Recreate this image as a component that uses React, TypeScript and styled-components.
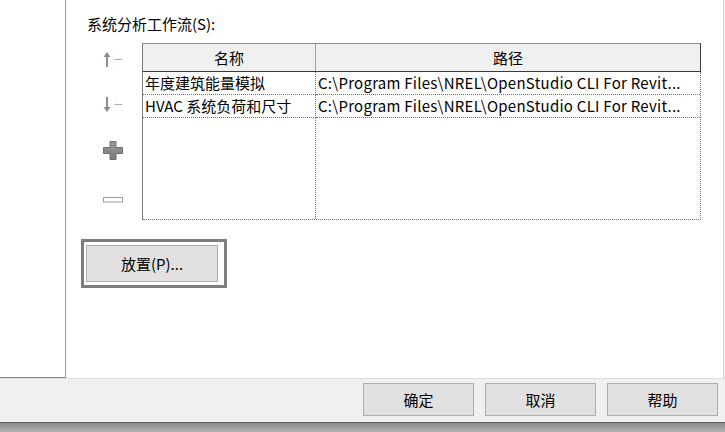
import React from "react";
import styled, { createGlobalStyle } from "styled-components";

const Global = createGlobalStyle`
  html, body { margin: 0; padding: 0; background: #ffffff; }
  body { font-family: "Noto Sans CJK SC", "Noto Sans", sans-serif; color: #000; }
  * { box-sizing: border-box; }
`;

const Window = styled.div`
  width: 725px;
  height: 432px;
  display: flex;
  flex-direction: column;
  overflow: hidden;
  font-size: 15px;
`;

const TopArea = styled.div`
  height: 378px;
  display: flex;
  background: #f0f0f0;
`;

const SidePanel = styled.div`
  width: 66px;
  height: 378px;
  background: #ffffff;
  border-right: 1px solid #9c9c9c;
  border-bottom: 1px solid #8a8a8a;
`;

const Main = styled.div`
  width: 658px;
  background: #ffffff;
  border-right: 1px solid #d2d2d2;
  padding: 14px 0 0 21px;
  display: flex;
  flex-direction: column;
`;

const Label = styled.div`
  height: 20px;
  line-height: 20px;
  white-space: nowrap;
`;

const ListRow = styled.div`
  display: flex;
  margin-top: 9px;
  gap: 19px;
`;

const IconColumn = styled.div`
  width: 20px;
  margin-left: 16px;
  display: flex;
  flex-direction: column;
  padding-top: 7px;
`;

const IconSlot = styled.div<{ $gap: number }>`
  width: 20px;
  height: 20px;
  margin-top: ${(p) => p.$gap}px;
  display: flex;
  align-items: center;
  justify-content: flex-start;
`;

const Table = styled.div`
  width: 559px;
  height: 177px;
  display: flex;
  flex-direction: column;
  border-left: 1px solid #7a7a7a;
`;

const HeaderRow = styled.div`
  height: 29px;
  display: grid;
  grid-template-columns: 173px 1fr;
  background: #f0f0f0;
  border-top: 1px solid #8e8e8e;
  border-bottom: 1px solid #3a3a3a;
  border-right: 1px solid #3a3a3a;
`;

const HeaderCell = styled.div<{ $divider?: boolean }>`
  display: flex;
  align-items: center;
  justify-content: center;
  line-height: 20px;
  border-right: ${(p) => (p.$divider ? "1px solid #a0a0a0" : "none")};
`;

const Body = styled.div`
  flex: 1;
  display: grid;
  grid-template-columns: 173px 1fr;
  grid-template-rows: 23px 23px 1fr;
  border-right: 1px dotted #707070;
  border-bottom: 1px dotted #707070;
`;

const Cell = styled.div<{ $divider?: boolean; $filler?: boolean; $latin?: boolean }>`
  display: flex;
  align-items: center;
  padding-left: 2px;
  white-space: nowrap;
  overflow: hidden;
  line-height: 20px;
  letter-spacing: ${(p) => (p.$latin ? "0.26px" : "0")};
  border-right: ${(p) => (p.$divider ? "1px dotted #707070" : "none")};
  border-bottom: ${(p) => (p.$filler ? "none" : "1px dotted #707070")};
`;

const PlaceFocus = styled.div`
  margin-top: 19px;
  margin-left: -6px;
  width: 146px;
  height: 49px;
  border: 3px solid #7e7e7e;
  padding: 3px 6px 3px 2px;
  display: flex;
`;

const PushButton = styled.div<{ $w?: number; $h?: number }>`
  width: ${(p) => (p.$w ? `${p.$w}px` : "100%")};
  height: ${(p) => (p.$h ? `${p.$h}px` : "100%")};
  background: #e1e1e1;
  border: 1px solid #adadad;
  display: flex;
  align-items: center;
  justify-content: center;
  line-height: 20px;
  white-space: nowrap;
`;

const BottomBar = styled.div`
  height: 44px;
  background: #f0f0f0;
  border-top: 1px solid #dedede;
  padding: 4px 7px 0 0;
  display: flex;
  justify-content: flex-end;
  gap: 11px;
`;

const Strip = styled.div`
  height: 10px;
  border-top: 1px solid #5e5e5e;
  background: linear-gradient(#8d8d8d, #b3b3b3);
`;

const UpIcon = () => (
  <svg width="20" height="16" viewBox="0 0 20 16">
    <polygon points="4,0 7.5,5 5,5 5,15 3,15 3,5 0.5,5" fill="#8c8c8c" />
    <line x1="11" y1="7.5" x2="19" y2="7.5" stroke="#a8a8a8" strokeWidth="1" />
    <line x1="12" y1="1" x2="12" y2="14" stroke="#e2e2e2" strokeWidth="1" strokeDasharray="1 2" />
  </svg>
);

const DownIcon = () => (
  <svg width="20" height="16" viewBox="0 0 20 16">
    <polygon points="3,0 5,0 5,10 7.5,10 4,15 0.5,10 3,10" fill="#8c8c8c" />
    <line x1="11" y1="7.5" x2="19" y2="7.5" stroke="#a8a8a8" strokeWidth="1" />
    <line x1="12" y1="1" x2="12" y2="14" stroke="#e2e2e2" strokeWidth="1" strokeDasharray="1 2" />
  </svg>
);

const PlusIcon = () => (
  <svg width="20" height="19" viewBox="0 0 20 19">
    <defs>
      <linearGradient id="pg" x1="0" y1="0" x2="0" y2="1">
        <stop offset="0" stopColor="#9a9a9a" />
        <stop offset="1" stopColor="#7a7a7a" />
      </linearGradient>
    </defs>
    <polygon
      points="7,0.5 13,0.5 13,6.5 19.5,6.5 19.5,12.5 13,12.5 13,18.5 7,18.5 7,12.5 0.5,12.5 0.5,6.5 7,6.5"
      fill="url(#pg)"
      stroke="#6e6e6e"
      strokeWidth="1"
    />
  </svg>
);

const MinusIcon = () => (
  <svg width="20" height="6" viewBox="0 0 20 6">
    <rect x="0.5" y="0.5" width="19" height="4.5" fill="#ffffff" stroke="#9a9a9a" strokeWidth="1" />
  </svg>
);

const rows = [
  { name: "年度建筑能量模拟", path: "C:\\Program Files\\NREL\\OpenStudio CLI For Revit..." },
  { name: "HVAC 系统负荷和尺寸", path: "C:\\Program Files\\NREL\\OpenStudio CLI For Revit..." },
];

export default function App() {
  return (
    <>
      <Global />
      <Window>
        <TopArea>
          <SidePanel />
          <Main>
            <Label>系统分析工作流(S):</Label>
            <ListRow>
              <IconColumn>
                <IconSlot $gap={0}><UpIcon /></IconSlot>
                <IconSlot $gap={25}><DownIcon /></IconSlot>
                <IconSlot $gap={25}><PlusIcon /></IconSlot>
                <IconSlot $gap={30}><MinusIcon /></IconSlot>
              </IconColumn>
              <Table>
                <HeaderRow>
                  <HeaderCell $divider>名称</HeaderCell>
                  <HeaderCell>路径</HeaderCell>
                </HeaderRow>
                <Body>
                  {rows.map((r) => (
                    <React.Fragment key={r.name}>
                      <Cell $divider>{r.name}</Cell>
                      <Cell $latin>{r.path}</Cell>
                    </React.Fragment>
                  ))}
                  <Cell $divider $filler />
                  <Cell $filler />
                </Body>
              </Table>
            </ListRow>
            <PlaceFocus>
              <PushButton>放置(P)...</PushButton>
            </PlaceFocus>
          </Main>
        </TopArea>
        <BottomBar>
          <PushButton $w={111} $h={33}>确定</PushButton>
          <PushButton $w={111} $h={33}>取消</PushButton>
          <PushButton $w={111} $h={33}>帮助</PushButton>
        </BottomBar>
        <Strip />
      </Window>
    </>
  );
}
